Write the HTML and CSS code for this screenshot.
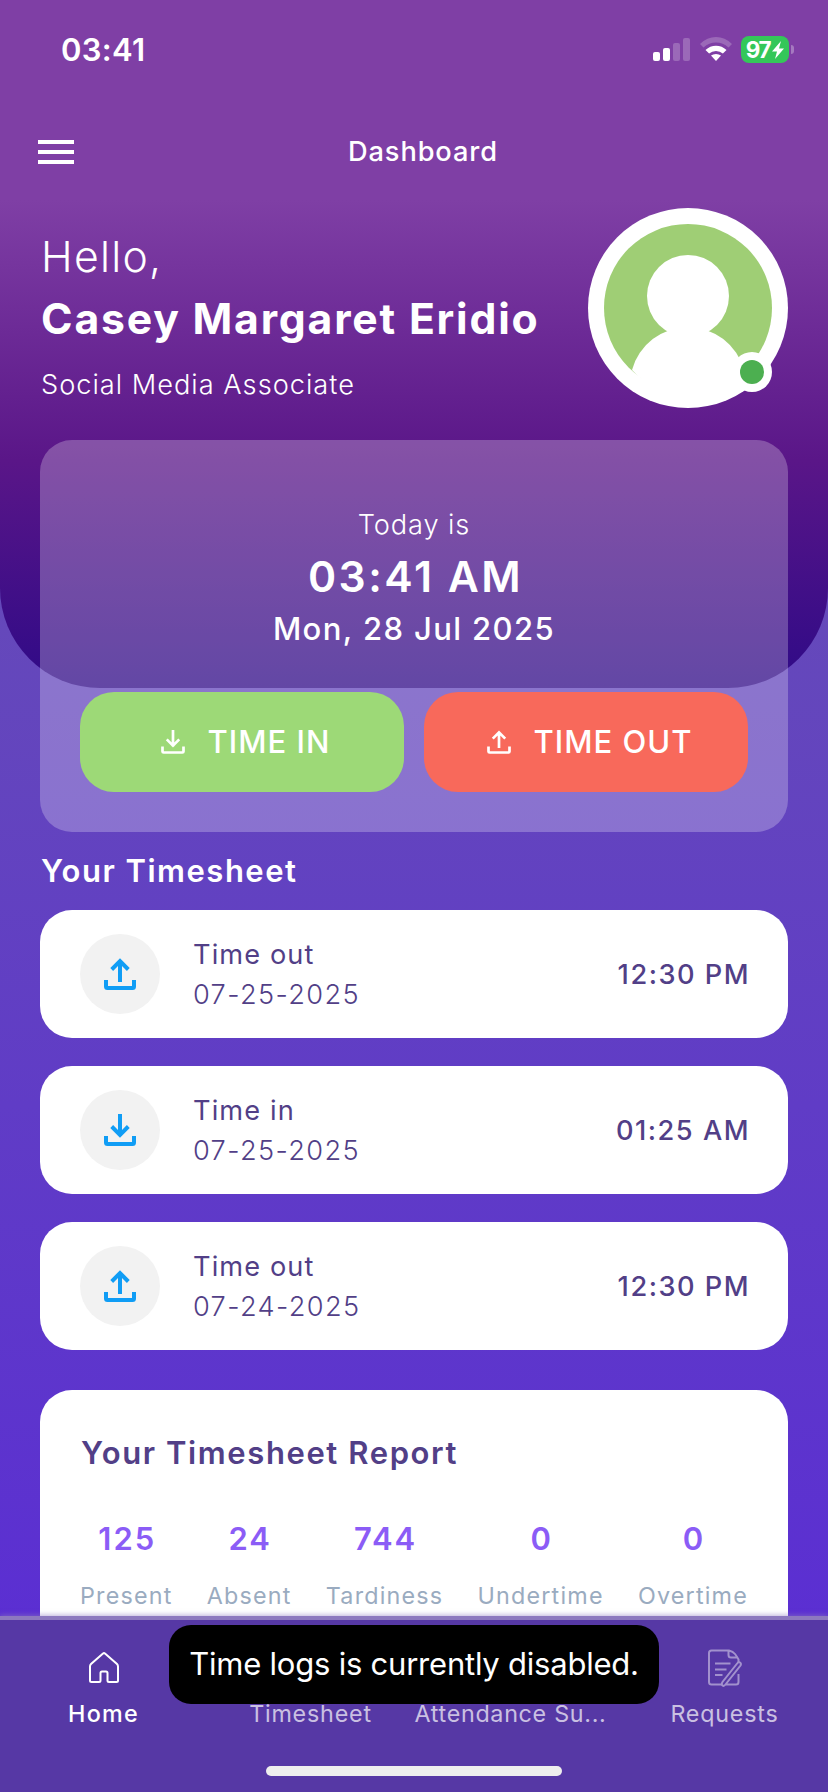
FILE: index.html
```html
<!DOCTYPE html>
<html lang="en">
<head>
    <meta charset="UTF-8">
    <meta name="viewport" content="width=device-width, initial-scale=1.0">
    <title>Dashboard</title>
    <link rel="stylesheet" href="styles.css">
</head>
<body>
    <svg class="defs">
        <symbol id="icon-in" viewBox="0 0 32 32">
            <path d="M2 22v6.5q0 1.5 1.5 1.5h25q1.5 0 1.5-1.5V22M16 0v22M7.7 12.5l8.3 8.3 8.3-8.3" />
        </symbol>
        <symbol id="icon-out" viewBox="0 0 32 32">
            <path d="M2 22v6.5q0 1.5 1.5 1.5h25q1.5 0 1.5-1.5V22M16 24V2.5M7.7 11.5l8.3-8.3 8.3 8.3" />
        </symbol>
    </svg>
    <div class="screen">
        <div class="status-bar">
            <span class="clock">03:41</span>
            <div class="status-icons">
                <svg class="signal" width="37" height="27" viewBox="0 0 37 27">
                    <rect x="0" y="16" width="7" height="9" rx="2" />
                    <rect x="10" y="12" width="7" height="13" rx="2" />
                    <rect class="dim" x="20" y="7" width="7" height="18" rx="2" />
                    <rect class="dim" x="30" y="2" width="7" height="23" rx="2" />
                </svg>
                <svg class="wifi" width="32" height="27" viewBox="0 0 32 27">
                    <path class="dim" d="M0 8Q7 1 16 1t16 7l-3.5 3.5Q23 6.5 16 6.5T3.5 11.5Z" />
                    <path d="M5.5 14Q10 9.7 16 9.7t10.5 4.3l-3.6 3.6Q20 15 16 15t-6.9 2.6Z" />
                    <path d="M11 19.6Q13 18 16 18t5 1.6L16 25Z" />
                </svg>
                <div class="battery">
                    <span>97</span>
                    <svg width="12" height="18" viewBox="0 0 12 18"><path d="M9 0 0 10.5h5L3 18l9-10.5H7Z" /></svg>
                </div>
                <i class="battery-tip"></i>
            </div>
        </div>

        <div class="top-bar">
            <div class="menu"><i></i><i></i><i></i></div>
            <h1 class="title">Dashboard</h1>
        </div>

        <div class="profile">
            <div class="greeting">
                <p class="hello">Hello,</p>
                <p class="name">Casey Margaret Eridio</p>
                <p class="role">Social Media Associate</p>
            </div>
            <svg class="avatar" width="200" height="200" viewBox="0 0 200 200">
                <circle cx="100" cy="100" r="100" fill="#fff" />
                <circle cx="100" cy="100" r="84" fill="#9fce75" />
                <circle cx="100" cy="88" r="41" fill="#fff" />
                <path d="M44 162a58 58 0 0 1 112 0Q135 186 100 186T44 162Z" fill="#fff" />
                <circle cx="164" cy="164" r="20" fill="#fff" />
                <circle cx="164" cy="164" r="12" fill="#4caf50" />
            </svg>
        </div>

        <div class="today">
            <p class="today-label">Today is</p>
            <p class="today-time">03:41 AM</p>
            <p class="today-date">Mon, 28 Jul 2025</p>
            <div class="buttons">
                <button class="btn time-in"><svg class="icon"><use href="#icon-in" /></svg><span>TIME IN</span></button>
                <button class="btn time-out"><svg class="icon"><use href="#icon-out" /></svg><span>TIME OUT</span></button>
            </div>
        </div>

        <h2 class="section-title">Your Timesheet</h2>
        <div class="logs">
            <div class="log">
                <div class="log-icon"><svg class="icon"><use href="#icon-out" /></svg></div>
                <div class="log-info">
                    <p class="log-type">Time out</p>
                    <p class="log-date">07-25-2025</p>
                </div>
                <span class="log-time">12:30 PM</span>
            </div>
            <div class="log">
                <div class="log-icon"><svg class="icon"><use href="#icon-in" /></svg></div>
                <div class="log-info">
                    <p class="log-type">Time in</p>
                    <p class="log-date">07-25-2025</p>
                </div>
                <span class="log-time">01:25 AM</span>
            </div>
            <div class="log">
                <div class="log-icon"><svg class="icon"><use href="#icon-out" /></svg></div>
                <div class="log-info">
                    <p class="log-type">Time out</p>
                    <p class="log-date">07-24-2025</p>
                </div>
                <span class="log-time">12:30 PM</span>
            </div>
        </div>

        <div class="report">
            <h2 class="report-title">Your Timesheet Report</h2>
            <div class="stats">
                <div class="stat"><b>125</b><span>Present</span></div>
                <div class="stat"><b>24</b><span>Absent</span></div>
                <div class="stat"><b>744</b><span>Tardiness</span></div>
                <div class="stat"><b>0</b><span>Undertime</span></div>
                <div class="stat"><b>0</b><span>Overtime</span></div>
            </div>
        </div>

        <div class="nav">
            <div class="nav-item active">
                <svg width="32" height="32" viewBox="-1 0 32 32"><path d="M1 14.5V28.5q0 1.5 1.5 1.5H10q1.5 0 1.5-1.5V21q0-1.5 1.5-1.5h4q1.5 0 1.5 1.5v7.5q0 1.5 1.5 1.5h7.5q1.5 0 1.5-1.5V14.5Q29 13 28 12L16 1.5Q15 .7 14 1.5L2 12Q1 13 1 14.5Z" /></svg>
                <span>Home</span>
            </div>
            <div class="nav-item"><span>Timesheet</span></div>
            <div class="nav-item"><span class="clipped">Attendance Su...</span></div>
            <div class="nav-item">
                <svg width="34" height="38" viewBox="0 0 34 38"><path d="M30.5 25v8q0 2.5-2.5 2.5H18M13.5 35.5H3.5Q1 35.5 1 33V4Q1 1.5 3.5 1.5H21q4 1 6 3.5t3.5 5.5v2M20.5 1.5V6q0 2.5 2.5 2.5h7M7 14.5h15.5M7 20.5h11.5M7 26h7.500M29.500 14 14.500 33q-1.500 2.500 0 3.500t3-1L32.500 16.500q1-2-.5-3t-2.500 .5Z" /></svg>
                <span>Requests</span>
            </div>
        </div>
        <div class="home-indicator"></div>
        <div class="toast">Time logs is currently disabled.</div>
    </div>
</body>
</html>
```
FILE: styles.css
```css
* {
    box-sizing: border-box;
}
body {
    margin: 0;
    font-family: Inter, "Liberation Sans", sans-serif;
    color: #fff;
}
h1, h2, p {
    margin: 0;
}
.defs {
    display: none;
}
.screen {
    position: relative;
    width: 828px;
    height: 1792px;
    overflow: hidden;
    display: flex;
    flex-direction: column;
    background: linear-gradient(#6549ba 590px, #5b2fd2 1620px);
}
/* rounded purple backdrop behind the header */
.screen::before {
    content: "";
    position: absolute;
    top: 0;
    left: 0;
    width: 100%;
    height: 688px;
    border-radius: 0 0 100px 100px;
    background: linear-gradient(#7f3fa5 200px, #5a1688 460px, #2f0a87 688px);
}
.status-bar, .top-bar, .profile, .today {
    position: relative;
}
.status-bar {
    height: 100px;
    flex: none;
    display: flex;
    justify-content: space-between;
    padding: 36px 34px 0 61px;
}
.clock {
    font-size: 31px;
    line-height: 28px;
    font-weight: 600;
    letter-spacing: 0.3px;
}
.status-icons {
    display: flex;
    height: 27px;
}
.status-icons svg {
    fill: #fff;
    flex: none;
}
.status-icons .dim {
    opacity: 0.22;
}
.wifi {
    margin: 0 9px 0 10px;
}
.battery {
    width: 48px;
    height: 27px;
    border-radius: 8px;
    background: #34c759;
    display: flex;
    align-items: center;
    justify-content: center;
    gap: 2px;
    font-size: 22.5px;
    font-weight: 700;
    letter-spacing: -1.5px;
}
.battery-tip {
    width: 3px;
    height: 9px;
    margin: 9px 0 0 2px;
    border-radius: 0 4px 4px 0;
    background: rgba(255, 255, 255, 0.3);
}
.top-bar {
    height: 108px;
    flex: none;
    display: flex;
    padding: 32px 0 0 38px;
}
.menu {
    width: 36px;
    height: 24px;
    margin-top: 8px;
    display: flex;
    flex-direction: column;
    justify-content: space-between;
}
.menu i {
    height: 4px;
    background: #fff;
}
.title {
    margin-left: 274px;
    font-size: 27.2px;
    line-height: 39px;
    font-weight: 500;
    letter-spacing: 0.9px;
}
.profile {
    height: 232px;
    flex: none;
    display: flex;
    justify-content: space-between;
    padding: 0 40px;
}
.greeting {
    padding: 19px 0 0 1px;
}
.hello {
    font-size: 42.7px;
    line-height: 60px;
    font-weight: 300;
    letter-spacing: 1.3px;
}
.name {
    font-size: 42.7px;
    line-height: 64px;
    font-weight: 700;
    letter-spacing: 1.8px;
}
.role {
    font-size: 27.2px;
    line-height: 68px;
    font-weight: 300;
    letter-spacing: 1px;
}
.today {
    height: 392px;
    flex: none;
    margin: 0 40px;
    padding: 65px 40px 0;
    border-radius: 32px;
    background: rgba(255, 255, 255, 0.25);
    text-align: center;
}
.today-label {
    font-size: 27.2px;
    line-height: 40px;
    font-weight: 300;
    letter-spacing: 0.9px;
}
.today-time {
    padding-left: 3px;
    font-size: 42.7px;
    line-height: 64px;
    font-weight: 600;
    letter-spacing: 2.5px;
}
.today-date {
    font-size: 31px;
    line-height: 39px;
    font-weight: 500;
    letter-spacing: 1.4px;
}
.buttons {
    display: flex;
    gap: 20px;
    margin-top: 44px;
}
.btn {
    flex: 1;
    height: 100px;
    padding: 0 0 0 7px;
    border: none;
    border-radius: 34px;
    display: flex;
    align-items: center;
    justify-content: center;
    gap: 23px;
    color: #fff;
    font: 500 31px Inter, sans-serif;
    letter-spacing: 1px;
}
.btn span {
    padding-bottom: 2px;
}
.time-in {
    background: #9dd977;
}
.time-out {
    background: #f8695b;
}
.icon {
    width: 32px;
    height: 32px;
    fill: none;
    stroke: #109df5;
    stroke-width: 4;
}
.btn .icon {
    width: 24px;
    height: 24px;
    stroke: #fff;
    stroke-width: 3.6;
}
.section-title {
    flex: none;
    height: 78px;
    padding-left: 41px;
    font-size: 31px;
    line-height: 78px;
    font-weight: 600;
    letter-spacing: 1.5px;
}
.logs {
    display: flex;
    flex-direction: column;
    flex: none;
    gap: 28px;
    padding: 0 40px;
}
.log {
    height: 128px;
    padding: 0 38px 0 40px;
    border-radius: 32px;
    background: #fff;
    color: #523f87;
    display: flex;
    align-items: center;
    font-size: 27.2px;
    letter-spacing: 1.1px;
}
.log-icon {
    width: 80px;
    height: 80px;
    margin-right: 33px;
    border-radius: 50%;
    background: #f2f2f2;
    display: flex;
    align-items: center;
    justify-content: center;
}
.log-info {
    flex: 1;
    padding-top: 2px;
    line-height: 40px;
}
.log-date {
    font-weight: 300;
    letter-spacing: 1.36px;
}
.log-time {
    font-weight: 500;
    letter-spacing: 1.5px;
}
.report {
    flex: none;
    height: 226px;
    margin: 40px 40px 0;
    padding: 40px 40px 0;
    border-radius: 32px 32px 0 0;
    background: #fff;
}
.report-title {
    padding-left: 1px;
    color: #523f87;
    font-size: 31px;
    line-height: 46px;
    font-weight: 600;
    letter-spacing: 1.6px;
}
.stats {
    display: flex;
    justify-content: space-between;
    margin-top: 40px;
}
.stat {
    display: flex;
    flex-direction: column;
    align-items: center;
    color: #9aabc0;
    font-size: 23.3px;
    letter-spacing: 1.2px;
}
.stat b {
    padding-left: 2px;
    color: #8b5cf6;
    font-size: 31px;
    line-height: 46px;
    font-weight: 600;
    letter-spacing: 2px;
}
.stat span {
    line-height: 68px;
}
.nav {
    position: relative;
    flex: none;
    height: 176px;
    border-top: 4px solid #8d79bf;
    background: #5638a5;
    box-shadow: 0 -1px 5px rgba(141, 121, 191, 0.6);
    display: grid;
    grid-template-columns: repeat(4, 207px);
}
.nav-item {
    display: flex;
    flex-direction: column;
    align-items: center;
    justify-content: flex-end;
    height: 108px;
    font-size: 23.3px;
    line-height: 28px;
    letter-spacing: 0.8px;
    white-space: nowrap;
    color: rgba(255, 255, 255, 0.7);
}
.nav-item svg {
    fill: none;
    stroke: rgba(255, 255, 255, 0.45);
    stroke-width: 2;
    margin-bottom: 13px;
}
.nav-item .clipped {
    margin-right: 14px;
    letter-spacing: 0.7px;
}
.nav-item.active {
    color: #fff;
    font-weight: 500;
    letter-spacing: 1.3px;
}
.nav-item.active svg {
    stroke: #fff;
    margin-bottom: 16px;
}
.home-indicator {
    position: absolute;
    left: 266px;
    bottom: 16px;
    width: 296px;
    height: 10px;
    border-radius: 5px;
    background: #eee;
}
.toast {
    position: absolute;
    left: 169px;
    top: 1625px;
    width: 490px;
    height: 79px;
    border-radius: 22px;
    background: #000;
    font-size: 31px;
    line-height: 77px;
    letter-spacing: -0.22px;
    text-align: center;
    white-space: nowrap;
}
```
